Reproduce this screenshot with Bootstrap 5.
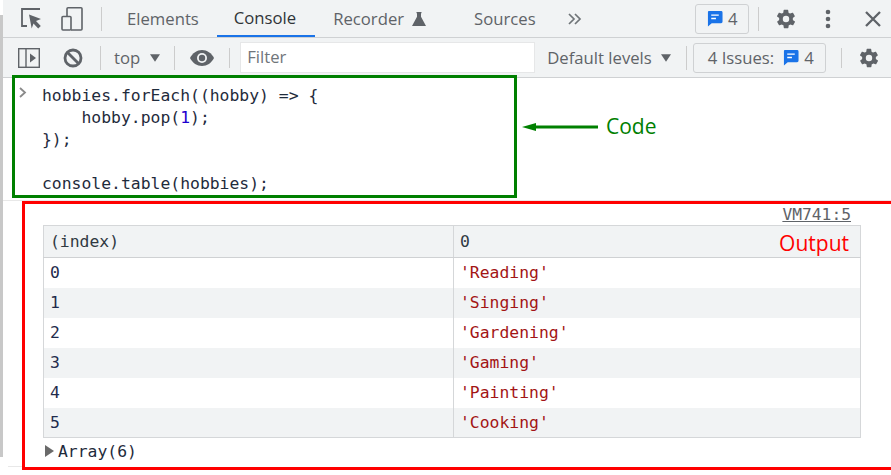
<!DOCTYPE html>
<html lang="en">
<head>
<meta charset="utf-8">
<title>DevTools console</title>
<link href="https://cdn.jsdelivr.net/npm/bootstrap@5.3.0/dist/css/bootstrap.min.css" rel="stylesheet">
<style>
html,body{height:100%;overflow:hidden}
body{background:#fff;font-family:"Open Sans","Noto Sans",sans-serif;color:#5f6368;width:891px}
.strip{width:3px;background:#c8c8c8;flex:none;margin-top:15px;height:442px}
.shell{height:475px}
.main{flex:1;min-width:0}
.bar{background:#f1f3f4;border-bottom:1px solid #cfd1d3;font-size:16.7px;color:#5f6368;white-space:nowrap}
.bar-a{height:38px;padding-left:18px}
.bar-b{height:40px;padding-left:15px}
.bar svg,.bar span{flex:none}
.vsep{width:1px;height:24px;background:#ccc}
.vsep-s{height:20px}
.tab-on{color:#303438;box-shadow:inset 0 -2px 0 #1a73e8;height:37px;line-height:35px;padding:0 19px 0 17px;margin-left:18px}
.m-device{margin-left:19px}.m-sep1{margin-left:18px}.m-el{margin-left:25px}.m-rec{margin-left:18px}.m-flask{margin-left:8px}.m-src{margin-left:48px}.m-more{margin-left:32px}
.m-s9{margin-left:9px}.m-s16{margin-left:16px}.m-dots{margin-left:28px}.m-x{margin-left:34px}.e-x{margin-right:10px}
.m-block{margin-left:23px}.m-sep2{margin-left:17px}.m-top{margin-left:13px}.m-arr10{margin-left:10px}.m-s14{margin-left:14px}.m-s15{margin-left:15px}.m-f{margin-left:10px}.m-def{margin-left:12px}.m-arr9{margin-left:9px}.m-iss{margin-left:6px}
.fbox{width:295px;height:31px;background:#fff;border:1px solid #e6e7e8;padding-left:6px;line-height:27px;color:#70757a}
.issue{border:1px solid #cfd1d3;border-radius:3px;height:30px;display:flex;align-items:center}
.issue-a{width:54px;padding-left:11px;gap:5px}
.issue-b{width:133px;padding-left:14px;gap:9px}
.issue-b svg{margin-right:-4px}
.code-mono{font-family:"DejaVu Sans Mono","Liberation Mono",monospace;font-size:16.4px;color:#1f2b3c}
.codebox{border:3px solid #008000;margin:-3px 0 0 9px;width:505px;height:123px;padding:7px 0 0 27px;line-height:22.1px;white-space:pre;position:relative;background:#fff}
.caret{position:absolute;left:4px;top:9px}
.num{color:#1c00cf}
.gap-row{height:3px;border-bottom:1px solid #e8e8e8}
.outbox{border:3px solid #f00;border-right:0;margin:0 0 0 19px;height:269px;padding:0 0 0 18px;position:relative}
.srcline{height:21px;text-align:right;padding-right:40px;font-size:16.3px;line-height:21px;color:#5f6368;text-decoration:underline}
.dtable{width:818px;border:1px solid #d5d7d9;border-collapse:collapse;table-layout:fixed;margin:0}
.col-idx{width:410px}
.dtable th,.dtable td{padding:0 6px;font-weight:400;height:30px;border-right:1px solid #d5d7d9;vertical-align:middle;line-height:29px}
.dtable thead th{height:32px;background:#f1f3f4;border-bottom:1px solid #cfd1d3;color:#303942}
.dtable tbody tr:nth-child(even) td{background:#f1f3f4}
.strv{color:#a31515}
.idx{color:#1f2b4c}
.outlabel{position:absolute;right:42px;top:25px;color:#f00;font-size:21px;line-height:28px;font-family:"Open Sans",sans-serif}
.codelabel{position:absolute;left:606px;top:112px;color:#008000;font-size:21px;line-height:28px}
.arrow{position:absolute;left:522px;top:122px}
.arr-line{height:25px;line-height:25px;padding:1px 0 0 2px;display:flex;align-items:center;gap:4px}
.tail{position:absolute;left:-17px;bottom:0;width:14px;height:1px;background:#e8e8e8}
</style>
</head>
<body>
<div class="shell d-flex position-relative">
  <div class="strip"></div>
  <div class="main d-flex flex-column">
    <div class="bar bar-a d-flex align-items-center">
      <svg width="21" height="21" viewBox="0 0 21 21" fill="none"><path d="M19 1H1v17h5" stroke="#5f6368" stroke-width="1.800"/><path d="M8 6.500l12 4.500-5 2 4.800 5-2.600 2.500-4.700-5-1.800 5z" fill="#5f6368"/></svg>
      <svg class="m-device" width="22" height="24" viewBox="0 0 22 24" fill="none" stroke="#5f6368" stroke-width="1.600"><path d="M6 9V1.800a1 1 0 0 1 1-1h13a1 1 0 0 1 1 1V22a1 1 0 0 1-1 1H10"/><rect x="1" y="9.500" width="9" height="13.500" rx="1"/></svg>
      <span class="vsep m-sep1"></span>
      <span class="m-el">Elements</span>
      <span class="tab-on">Console</span>
      <span class="m-rec">Recorder</span>
      <svg class="m-flask" width="14" height="14" viewBox="0 0 14 14"><path d="M4.500 0h5v1.200H9v3.600L14 14H0L5 4.800V1.200h-.5z" fill="#5f6368"/></svg>
      <span class="m-src">Sources</span>
      <svg class="m-more" width="14" height="12" viewBox="0 0 14 12" fill="none" stroke="#6f7478" stroke-width="1.700"><path d="M1 1l5 5-5 5M7 1l5 5-5 5"/></svg>
      <span class="issue issue-a ms-auto"><svg width="16" height="17" viewBox="0 0 17 18"><path d="M2 1h13a1.500 1.500 0 0 1 1.500 1.500v10A1.500 1.500 0 0 1 15 14H5l-4 3.500V2A1 1 0 0 1 2 1z" fill="#1a73e8"/><path d="M4.500 5.500h8M4.500 9h5" stroke="#fff" stroke-width="1.400"/></svg>4</span>
      <span class="vsep m-s9"></span>
      <svg class="m-s16" width="22" height="22" viewBox="0 0 24 24"><path fill="#5f6368" d="M19.400 13c.1-.3.100-.7.100-1s0-.7-.1-1l2.100-1.600c.2-.2.200-.4.100-.6l-2-3.500c-.1-.2-.4-.3-.6-.2l-2.500 1c-.5-.4-1.100-.7-1.700-1l-.4-2.600c0-.3-.2-.5-.5-.5h-4c-.3 0-.5.200-.5.500l-.4 2.600c-.6.300-1.200.6-1.700 1l-2.500-1c-.2-.1-.5 0-.6.200l-2 3.500c-.1.200-.1.400.1.600L4.600 11c-.1.300-.1.700-.1 1s0 .7.100 1l-2.100 1.600c-.2.200-.2.400-.1.600l2 3.500c.1.200.4.300.6.200l2.500-1c.5.400 1.100.7 1.700 1l.4 2.600c0 .3.200.5.500.5h4c.3 0 .5-.2.500-.5l.4-2.600c.6-.3 1.200-.6 1.700-1l2.500 1c.2.100.5 0 .6-.2l2-3.500c.1-.2.100-.4-.1-.6zM12 15.500a3.500 3.500 0 1 1 0-7 3.500 3.500 0 0 1 0 7z"/></svg>
      <svg class="m-dots" width="6" height="20" viewBox="0 0 6 20" fill="#5f6368"><circle cx="3" cy="3" r="2.300"/><circle cx="3" cy="10" r="2.300"/><circle cx="3" cy="17" r="2.300"/></svg>
      <svg class="m-x e-x" width="16" height="16" viewBox="0 0 16 16" stroke="#5f6368" stroke-width="2.300"><path d="M1 1l14 14M15 1L1 15"/></svg>
    </div>
    <div class="bar bar-b d-flex align-items-center">
      <svg width="22" height="20" viewBox="0 0 22 20" fill="none" stroke="#5f6368" stroke-width="1.400"><rect x=".7" y=".7" width="20.600" height="18.600"/><path d="M8 1v18"/><path d="M12 5.500l6 4.500-6 4.500z" fill="#5f6368" stroke="none"/></svg>
      <svg class="m-block" width="20" height="20" viewBox="0 0 20 20" fill="none" stroke="#5f6368" stroke-width="2.800"><circle cx="10" cy="10" r="8"/><path d="M4.500 4.500l11 11"/></svg>
      <span class="vsep m-sep2"></span>
      <span class="m-top">top</span>
      <svg class="m-arr10" width="10" height="8" viewBox="0 0 12 9"><path d="M0 0h12L6 9z" fill="#5f6368"/></svg>
      <span class="vsep m-s14"></span>
      <svg class="m-s15" width="24" height="16" viewBox="0 0 24 16"><path d="M12 0C7 0 2.500 3 0 8c2.500 5 7 8 12 8s9.500-3 12-8c-2.500-5-7-8-12-8z" fill="#5f6368"/><circle cx="12" cy="8" r="5" fill="#f1f3f4"/><circle cx="12" cy="8" r="3.200" fill="#5f6368"/></svg>
      <span class="vsep vsep-s m-s15"></span>
      <span class="fbox m-f">Filter</span>
      <span class="m-def">Default levels</span>
      <svg class="m-arr9" width="10" height="8" viewBox="0 0 12 9"><path d="M0 0h12L6 9z" fill="#5f6368"/></svg>
      <span class="vsep m-s15"></span>
      <span class="issue issue-b m-iss">4 Issues: <svg width="16" height="17" viewBox="0 0 17 18"><path d="M2 1h13a1.500 1.500 0 0 1 1.500 1.500v10A1.500 1.500 0 0 1 15 14H5l-4 3.500V2A1 1 0 0 1 2 1z" fill="#1a73e8"/><path d="M4.500 5.500h8M4.500 9h5" stroke="#fff" stroke-width="1.400"/></svg>4</span>
      <span class="vsep vsep-s m-s15"></span>
      <svg class="m-s16" width="22" height="22" viewBox="0 0 24 24"><path fill="#5f6368" d="M19.400 13c.1-.3.100-.7.100-1s0-.7-.1-1l2.100-1.600c.2-.2.200-.4.100-.6l-2-3.500c-.1-.2-.4-.3-.6-.2l-2.500 1c-.5-.4-1.100-.7-1.700-1l-.4-2.600c0-.3-.2-.5-.5-.5h-4c-.3 0-.5.200-.5.500l-.4 2.600c-.6.300-1.200.6-1.700 1l-2.500-1c-.2-.1-.5 0-.6.200l-2 3.500c-.1.200-.1.400.1.600L4.600 11c-.1.300-.1.700-.1 1s0 .7.100 1l-2.100 1.600c-.2.200-.2.400-.1.600l2 3.500c.1.200.4.300.6.200l2.500-1c.5.400 1.100.7 1.700 1l.4 2.600c0 .3.200.5.500.5h4c.3 0 .5-.2.500-.5l.4-2.600c.6-.3 1.200-.6 1.700-1l2.500 1c.2.100.5 0 .6-.2l2-3.500c.1-.2.100-.4-.1-.6zM12 15.500a3.500 3.500 0 1 1 0-7 3.500 3.500 0 0 1 0 7z"/></svg>
    </div>
    <div class="codebox code-mono"><svg class="caret" width="9" height="11" viewBox="0 0 9 11" fill="none" stroke="#8a8a8a" stroke-width="1.800"><path d="M1 1l5 4.500L1 10"/></svg>hobbies.forEach((hobby) =&gt; {
    hobby.pop(<span class="num">1</span>);
});

console.table(hobbies);</div>
    <div class="gap-row"></div>
    <div class="outbox code-mono">
      <div class="srcline">VM741:5</div>
      <table class="dtable">
        <colgroup><col class="col-idx"><col></colgroup>
        <thead><tr><th>(index)</th><th>0</th></tr></thead>
        <tbody>
          <tr><td class="idx">0</td><td class="strv">'Reading'</td></tr>
          <tr><td class="idx">1</td><td class="strv">'Singing'</td></tr>
          <tr><td class="idx">2</td><td class="strv">'Gardening'</td></tr>
          <tr><td class="idx">3</td><td class="strv">'Gaming'</td></tr>
          <tr><td class="idx">4</td><td class="strv">'Painting'</td></tr>
          <tr><td class="idx">5</td><td class="strv">'Cooking'</td></tr>
        </tbody>
      </table>
      <div class="arr-line"><svg width="9" height="12" viewBox="0 0 9 12"><path d="M0 0l9 6-9 6z" fill="#6a6a6a"/></svg>Array(6)</div>
      <div class="outlabel">Output</div>
      <div class="tail"></div>
    </div>
  </div>
  <svg class="arrow" width="76" height="10" viewBox="0 0 76 10"><path d="M0 5l14-4v2.500h62v3H14V9z" fill="#008000"/></svg>
  <div class="codelabel">Code</div>
</div>
</body>
</html>
